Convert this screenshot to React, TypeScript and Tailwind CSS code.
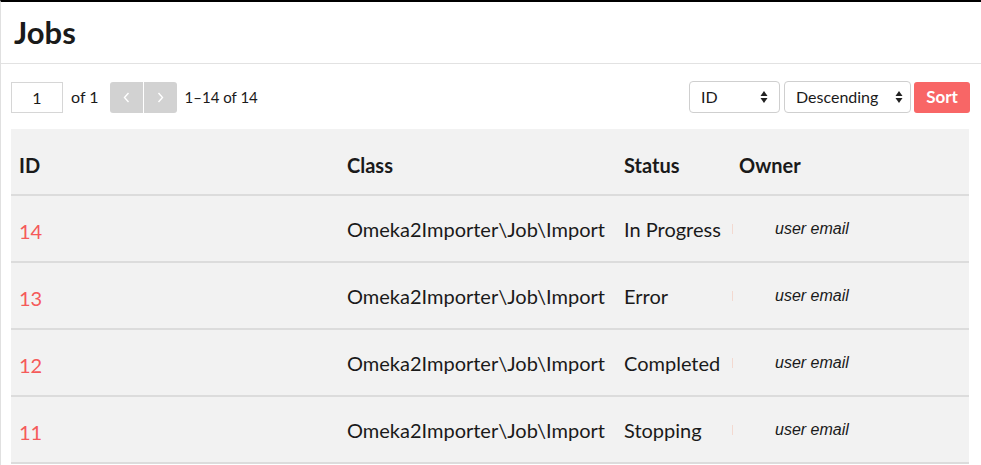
import React from "react";

const rows = [
  { id: 14, status: "In Progress" },
  { id: 13, status: "Error" },
  { id: 12, status: "Completed" },
  { id: 11, status: "Stopping" },
];

function Arrows() {
  return (
    <svg width="8" height="14" viewBox="0 0 8 14" className="shrink-0">
      <path d="M4 1 L7.5 6 L0.5 6 Z" fill="#222" />
      <path d="M4 13 L7.5 8 L0.5 8 Z" fill="#222" />
    </svg>
  );
}

function Chevron({ dir }: { dir: "l" | "r" }) {
  return (
    <svg width="7" height="11" viewBox="0 0 7 11">
      <path
        d={dir === "l" ? "M5.5 1 L1.5 5.5 L5.5 10" : "M1.5 1 L5.5 5.5 L1.5 10"}
        fill="none"
        stroke="#fff"
        strokeWidth="1.4"
      />
    </svg>
  );
}

export default function App() {
  return (
    <div
      className="w-[981px] h-[465px] overflow-hidden bg-white border-t-2 border-black border-l border-l-[#e0e0e0] text-[#1a1a1a]"
      style={{ fontFamily: "Lato, 'Open Sans', sans-serif" }}
    >
      <div className="h-[62px] border-b border-[#e2e2e2] flex items-center pl-[13px]">
        <h1 className="text-[31px] font-bold leading-none">Jobs</h1>
      </div>
      <div className="pl-[10px] pr-[11px]">
        <div className="flex items-center h-[65px] pt-[1px]">
          <input
            readOnly
            value="1"
            className="w-[52px] h-[31px] border border-[#d6d6d6] text-center text-[16px] outline-none"
          />
          <span className="ml-[8px] text-[16px]">of 1</span>
          <div className="ml-[11px] flex gap-[1px] rounded-[3px] overflow-hidden">
            <div className="w-[33px] h-[31px] bg-[#d2d2d2] flex items-center justify-center">
              <Chevron dir="l" />
            </div>
            <div className="w-[33px] h-[31px] bg-[#d2d2d2] flex items-center justify-center">
              <Chevron dir="r" />
            </div>
          </div>
          <span className="ml-[8px] text-[15px]">1–14 of 14</span>
          <div className="ml-auto flex items-center gap-[4px]">
            <div className="w-[91px] h-[32px] border border-[#cfcfcf] rounded-[4px] flex items-center justify-between px-[11px] text-[16px]">
              <span>ID</span>
              <Arrows />
            </div>
            <div className="w-[127px] h-[32px] border border-[#cfcfcf] rounded-[4px] flex items-center justify-between pl-[11px] pr-[7px] text-[16px]">
              <span>Descending</span>
              <Arrows />
            </div>
            <div className="w-[56px] h-[31px] bg-[#f86666] rounded-[3px] flex items-center justify-center text-white font-bold text-[17px] ml-[-1px]">
              Sort
            </div>
          </div>
        </div>
        <div className="w-[958px] bg-[#f2f2f2]">
          <div className="grid grid-cols-[328px_277px_115px_1fr] h-[67px] items-center border-b-2 border-[#dcdcdc] text-[20px] font-bold">
            <div className="pl-[8px] mt-[6px]">ID</div>
            <div className="pl-[8px] mt-[6px]">Class</div>
            <div className="pl-[8px] mt-[6px]">Status</div>
            <div className="pl-[8px] mt-[6px]">Owner</div>
          </div>
          {rows.map((r) => (
            <div
              key={r.id}
              className="grid grid-cols-[328px_277px_115px_1fr] h-[67px] items-center border-b-2 border-[#dcdcdc] text-[20px]"
            >
              <div className="pl-[8px] text-[#f55a5a] mt-[4px]">{r.id}</div>
              <div className="pl-[8px]">Omeka2Importer\Job\Import</div>
              <div className="pl-[8px]">{r.status}</div>
              <div className="pl-[8px] flex items-center">
                <span className="w-[1px] h-[10px] bg-[#f3d9d0] ml-[-7px]" />
                <span
                  className="ml-[42px] text-[16px] italic"
                  style={{ fontFamily: "'Liberation Sans', Arial, sans-serif" }}
                >
                  user email
                </span>
              </div>
            </div>
          ))}
        </div>
      </div>
    </div>
  );
}
